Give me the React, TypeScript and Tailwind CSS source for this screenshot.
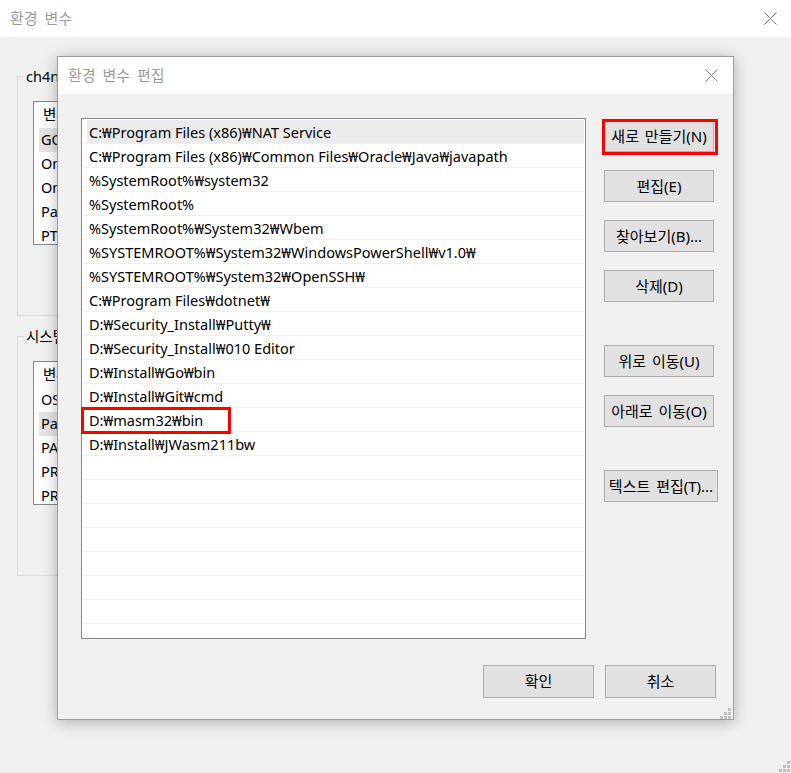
import React from "react";

const FONT = "font-['Noto_Sans','Noto_Sans_CJK_KR',sans-serif]";

function CloseX({ color = "#8c8c8c" }: { color?: string }) {
  return (
    <svg width="13" height="13" viewBox="0 0 13 13">
      <path d="M0.5 0.5 L12.5 12.5 M12.5 0.5 L0.5 12.5" stroke={color} strokeWidth="1" fill="none" />
    </svg>
  );
}

function Grip() {
  const c = "#bfbfbf";
  return (
    <svg width="11" height="11" viewBox="0 0 11 11">
      <rect x="8" y="0" width="3" height="3" fill={c} />
      <rect x="4" y="4" width="3" height="3" fill={c} />
      <rect x="8" y="4" width="3" height="3" fill={c} />
      <rect x="0" y="8" width="3" height="3" fill={c} />
      <rect x="4" y="8" width="3" height="3" fill={c} />
      <rect x="8" y="8" width="3" height="3" fill={c} />
    </svg>
  );
}

function Btn({ label, w = "w-[110px]", h = "h-[32px]" }: { label: string; w?: string; h?: string }) {
  return (
    <div
      className={`${w} ${h} shrink-0 bg-[#e1e1e1] border border-[#adadad] flex items-center justify-center text-[15px] text-black whitespace-nowrap [word-spacing:2px]`}
    >
      {label}
    </div>
  );
}

function BgList({ rows, selected }: { rows: string[]; selected: number }) {
  return (
    <div className="ml-[15px] mt-[24px] w-[640px] h-[144px] bg-white border border-[#828790] overflow-hidden">
      <div className="h-[26px] flex items-center pl-[9px] text-[14.5px]">변수</div>
      {rows.map((r, i) => (
        <div
          key={i}
          className={`h-[24px] flex items-center pl-[2px] ml-[5px] text-[14.5px] ${i === selected ? "bg-[#e5e5e5]" : ""}`}
        >
          {r}
        </div>
      ))}
    </div>
  );
}

const paths = [
  "C:₩Program Files (x86)₩NAT Service",
  "C:₩Program Files (x86)₩Common Files₩Oracle₩Java₩javapath",
  "%SystemRoot%₩system32",
  "%SystemRoot%",
  "%SystemRoot%₩System32₩Wbem",
  "%SYSTEMROOT%₩System32₩WindowsPowerShell₩v1.0₩",
  "%SYSTEMROOT%₩System32₩OpenSSH₩",
  "C:₩Program Files₩dotnet₩",
  "D:₩Security_Install₩Putty₩",
  "D:₩Security_Install₩010 Editor",
  "D:₩Install₩Go₩bin",
  "D:₩Install₩Git₩cmd",
  "D:₩masm32₩bin",
  "D:₩Install₩JWasm211bw",
];

export default function App() {
  const rows = [...paths, ...Array(8).fill("")];
  return (
    <div className={`relative w-[791px] h-[773px] bg-[#f0f0f0] overflow-hidden text-black ${FONT}`}>
      {/* Background window title bar */}
      <div className="h-[37px] bg-white flex items-center justify-between pl-[10px] pr-[14px]">
        <span className="text-[15px] text-[#9b9b9b] [word-spacing:3px]">환경 변수</span>
        <CloseX color="#7a7a7a" />
      </div>

      {/* Background window content */}
      <div className="pl-[17px] pt-[39px] flex flex-col gap-[20px]">
        <div className="relative w-[680px] h-[240px] border border-[#dcdcdc]">
          <span className="absolute -top-[11px] left-[6px] px-[2px] bg-[#f0f0f0] text-[14.5px] leading-[20px]">
            ch4ng3에 대한 사용자 변수(U)
          </span>
          <BgList rows={["GOPATH", "OneDrive", "OneDriveConsumer", "Path", "PTEMP"]} selected={0} />
        </div>
        <div className="relative w-[680px] h-[240px] border border-[#dcdcdc]">
          <span className="absolute -top-[11px] left-[6px] px-[2px] bg-[#f0f0f0] text-[14.5px] leading-[20px]">
            시스템 변수(S)
          </span>
          <BgList rows={["OS", "Path", "PATHEXT", "PROCESSOR_ARCHITECTURE", "PROCESSOR_IDENTIFIER"]} selected={1} />
        </div>
      </div>

      <div className="absolute right-[1px] bottom-[1px]">
        <Grip />
      </div>

      {/* Edit dialog (window on desktop) */}
      <div className="absolute left-[57px] top-[56px] w-[677px] h-[664px] border border-[#9d9d9d] bg-[#f0f0f0] shadow-[0_2px_14px_rgba(0,0,0,0.28)] flex flex-col">
        <div className="h-[37px] bg-white flex items-center justify-between pl-[10px] pr-[15px]">
          <span className="text-[15px] text-[#9b9b9b] [word-spacing:3px]">환경 변수 편집</span>
          <CloseX color="#8f8f8f" />
        </div>

        <div className="flex pl-[23px] pt-[24px] gap-[18px]">
          <div className="relative w-[505px] h-[521px] bg-white border border-[#828790]">
            <div className="h-full overflow-hidden p-[1px]">
              {rows.map((r, i) => (
                <div key={i} className="h-[24px] border-b border-[#efefef] flex">
                  <div
                    className={`flex-1 ml-[4px] flex items-center pl-[2px] pt-[2px] text-[14.5px] whitespace-nowrap ${i === 0 ? "bg-[#ebebeb]" : ""}`}
                  >
                    {r}
                  </div>
                </div>
              ))}
            </div>
            <div className="absolute -left-[1px] top-[288px] w-[150px] h-[27px] border-[3px] border-[#ff0000]" />
          </div>

          <div className="flex flex-col pt-[2px]">
            <div className="relative">
              <Btn label="새로 만들기(N)" />
              <div className="absolute -left-[2px] -top-[1px] w-[116px] h-[36px] border-[3px] border-[#ff0000]" />
            </div>
            <div className="mt-[18px]"><Btn label="편집(E)" /></div>
            <div className="mt-[18px]"><Btn label="찾아보기(B)..." /></div>
            <div className="mt-[18px]"><Btn label="삭제(D)" /></div>
            <div className="mt-[43px]"><Btn label="위로 이동(U)" /></div>
            <div className="mt-[18px]"><Btn label="아래로 이동(O)" /></div>
            <div className="mt-[43px]"><Btn label="텍스트 편집(T)..." w="w-[114px]" /></div>
          </div>
        </div>

        <div className="flex justify-end gap-[11px] pr-[17px] mt-[26px]">
          <Btn label="확인" w="w-[111px]" h="h-[33px]" />
          <Btn label="취소" w="w-[111px]" h="h-[33px]" />
        </div>

        <div className="absolute right-[2px] bottom-[0px]">
          <Grip />
        </div>
      </div>
    </div>
  );
}
